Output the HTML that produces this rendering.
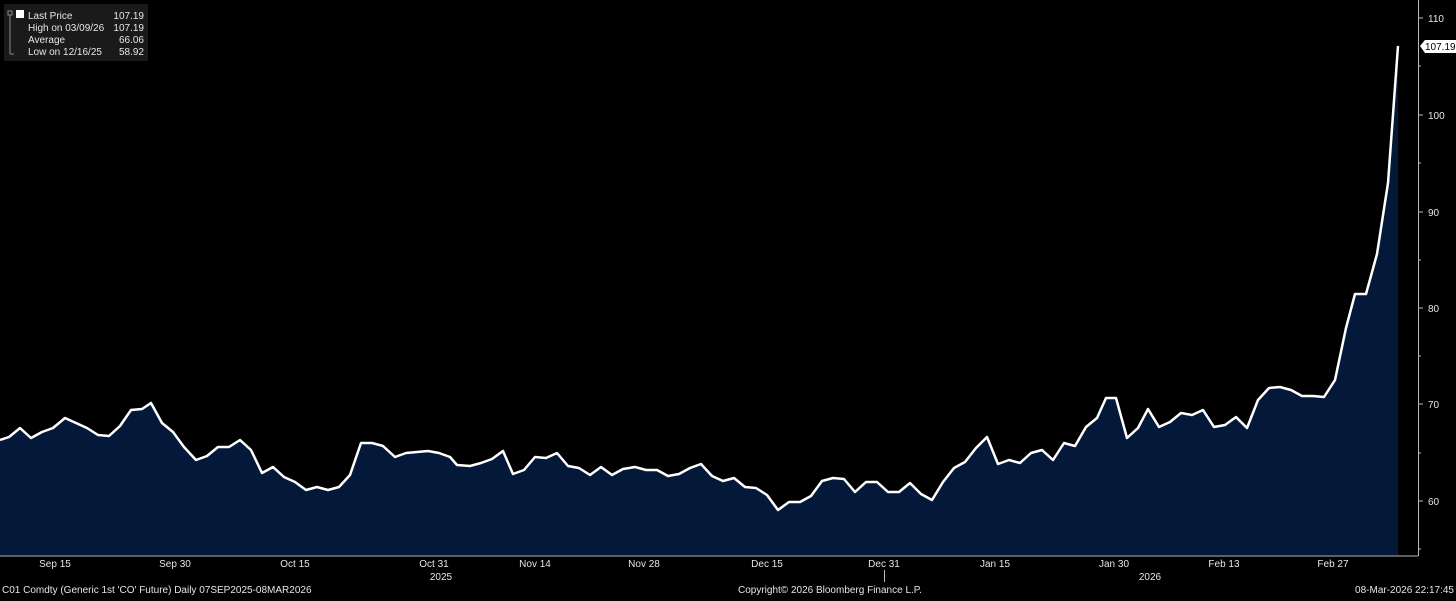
<!DOCTYPE html>
<html><head><style>
body{margin:0;background:#000;width:1456px;height:596px;overflow:hidden;font-family:"Liberation Sans",sans-serif;}
svg text{font-family:"Liberation Sans",sans-serif;fill:#e6e6e6;font-size:10px}
</style></head><body>
<svg width="1456" height="596" viewBox="0 0 1456 596">
<defs>
<polyline id="p" points="0,440 9,437 20,428 31,438 42,432 53,428 65,418 76,423 87,428 98,435 109,436 120,426 131,410 142,409 151,403 162,423 173,432 184,447 196,460 207,456 218,447 229,447 240,440 251,450 262,473 273,467 284,477 295,482 306,490 317,487 328,490 339,487 350,475 361,443 372,443 383,446 395,457 406,453 417,452 428,451 439,453 450,457 457,465 470,466 481,463 492,459 503,451 513,474 524,470 535,457 546,458 557,453 568,466 579,468 590,475 601,467 612,475 623,469 635,467 646,470 657,470 668,476 679,474 690,468 701,464 712,476 723,481 734,478 745,487 756,488 767,495 778,510 789,502 800,502 811,496 822,481 833,478 844,479 855,492 866,482 877,482 888,492 899,492 910,483 921,494 932,500 943,482 954,468 965,462 976,448 987,437 998,464 1009,460 1020,463 1031,453 1042,450 1053,460 1064,443 1075,446 1086,427 1097,418 1106,398 1116,398 1127,438 1138,428 1148,409 1159,427 1170,422 1181,413 1192,415 1203,410 1214,427 1225,425 1236,417 1247,428 1258,400 1269,388 1280,387 1291,390 1302,396 1313,396 1324,397 1335,380 1346,328 1355,294 1366,294 1377,254 1388,183 1398,46"/>
</defs>
<polygon fill="#04193a" points="0,555 0,440 9,437 20,428 31,438 42,432 53,428 65,418 76,423 87,428 98,435 109,436 120,426 131,410 142,409 151,403 162,423 173,432 184,447 196,460 207,456 218,447 229,447 240,440 251,450 262,473 273,467 284,477 295,482 306,490 317,487 328,490 339,487 350,475 361,443 372,443 383,446 395,457 406,453 417,452 428,451 439,453 450,457 457,465 470,466 481,463 492,459 503,451 513,474 524,470 535,457 546,458 557,453 568,466 579,468 590,475 601,467 612,475 623,469 635,467 646,470 657,470 668,476 679,474 690,468 701,464 712,476 723,481 734,478 745,487 756,488 767,495 778,510 789,502 800,502 811,496 822,481 833,478 844,479 855,492 866,482 877,482 888,492 899,492 910,483 921,494 932,500 943,482 954,468 965,462 976,448 987,437 998,464 1009,460 1020,463 1031,453 1042,450 1053,460 1064,443 1075,446 1086,427 1097,418 1106,398 1116,398 1127,438 1138,428 1148,409 1159,427 1170,422 1181,413 1192,415 1203,410 1214,427 1225,425 1236,417 1247,428 1258,400 1269,388 1280,387 1291,390 1302,396 1313,396 1324,397 1335,380 1346,328 1355,294 1366,294 1377,254 1388,183 1398,46 1398,555"/>
<use href="#p" fill="none" stroke="#fff" stroke-width="2.5" stroke-linejoin="round"/>
<line x1="0" y1="556" x2="1418" y2="556" stroke="#bbb" stroke-width="1"/>
<line x1="1418.5" y1="0" x2="1418.5" y2="556" stroke="#bbb" stroke-width="1"/>
<g stroke="#bbb">
<line x1="1418" y1="18" x2="1423" y2="18"/><line x1="1418" y1="115" x2="1423" y2="115"/><line x1="1418" y1="212" x2="1423" y2="212"/><line x1="1418" y1="308" x2="1423" y2="308"/><line x1="1418" y1="404" x2="1423" y2="404"/><line x1="1418" y1="501" x2="1423" y2="501"/>
<line x1="1418" y1="66" x2="1421" y2="66"/><line x1="1418" y1="163" x2="1421" y2="163"/><line x1="1418" y1="260" x2="1421" y2="260"/><line x1="1418" y1="356" x2="1421" y2="356"/><line x1="1418" y1="453" x2="1421" y2="453"/><line x1="1418" y1="549" x2="1421" y2="549"/>
<line x1="884.5" y1="570" x2="884.5" y2="582"/>
</g>
<g text-anchor="start">
<text x="1428" y="22">110</text><text x="1428" y="119">100</text><text x="1428" y="216">90</text><text x="1428" y="312">80</text><text x="1428" y="408">70</text><text x="1428" y="505">60</text>
</g>
<polygon points="1420,46 1425,40 1456,40 1456,53 1425,53" fill="#fff"/>
<text x="1425" y="50" style="fill:#000">107.19</text>
<g text-anchor="middle">
<text x="55" y="567">Sep 15</text><text x="175" y="567">Sep 30</text><text x="295" y="567">Oct 15</text><text x="434" y="567">Oct 31</text><text x="441" y="580">2025</text><text x="535" y="567">Nov 14</text><text x="644" y="567">Nov 28</text><text x="767" y="567">Dec 15</text><text x="884" y="567">Dec 31</text><text x="995" y="567">Jan 15</text><text x="1114" y="567">Jan 30</text><text x="1150" y="580">2026</text><text x="1224" y="567">Feb 13</text><text x="1333" y="567">Feb 27</text>
</g>
<text x="2" y="593">C01 Comdty (Generic 1st 'CO' Future) Daily 07SEP2025-08MAR2026</text>
<text x="738" y="593">Copyright© 2026 Bloomberg Finance L.P.</text>
<text x="1454" y="593" text-anchor="end">08-Mar-2026 22:17:45</text>
<rect x="4" y="4" width="144" height="57" fill="#1a1a1a"/>
<rect x="16" y="10" width="8" height="8" fill="#fff"/>
<g stroke="#888" fill="none"><rect x="8" y="11" width="4" height="4"/><line x1="10" y1="15" x2="10" y2="54"/><line x1="10" y1="54" x2="14" y2="54"/></g>
<text x="28" y="19">Last Price</text><text x="144" y="19" text-anchor="end">107.19</text>
<text x="28" y="31">High on 03/09/26</text><text x="144" y="31" text-anchor="end">107.19</text>
<text x="28" y="43">Average</text><text x="144" y="43" text-anchor="end">66.06</text>
<text x="28" y="55">Low on 12/16/25</text><text x="144" y="55" text-anchor="end">58.92</text>
</svg>
</body></html>
